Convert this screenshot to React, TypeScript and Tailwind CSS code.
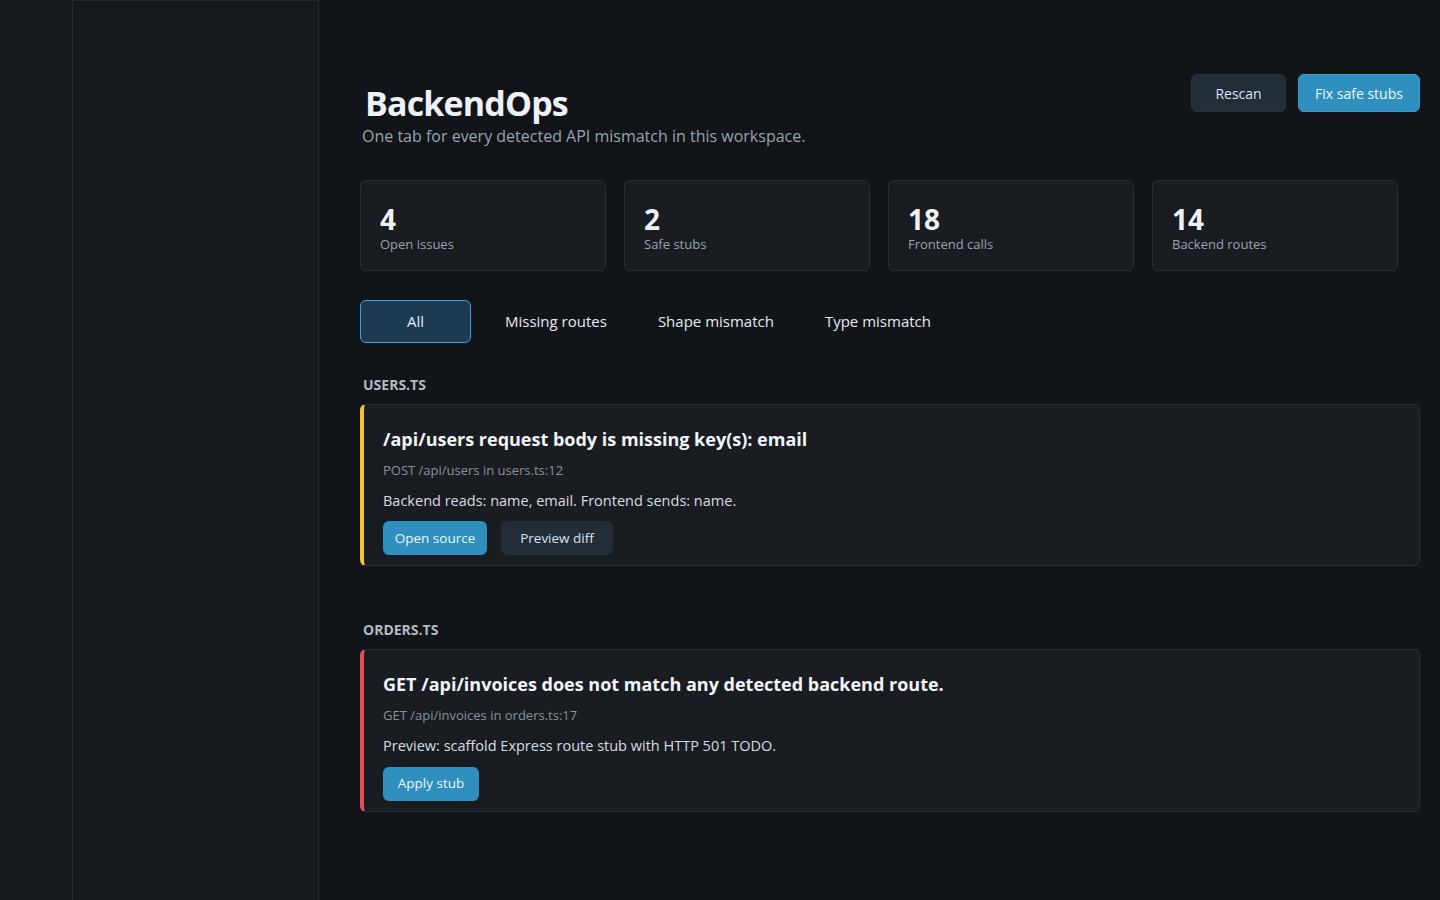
import React from "react";

const stats = [
  { n: "4", label: "Open issues" },
  { n: "2", label: "Safe stubs" },
  { n: "18", label: "Frontend calls" },
  { n: "14", label: "Backend routes" },
];

const tabs = ["Missing routes", "Shape mismatch", "Type mismatch"];

const IssueCard = ({
  accent,
  title,
  meta,
  body,
  actions,
}: {
  accent: string;
  title: string;
  meta: string;
  body: string;
  actions: React.ReactNode;
}) => (
  <div className={`rounded-md border border-[#2a2f36] border-l-4 ${accent} bg-[#191c21] pl-[19px] pr-6 pt-[22px] pb-[10px]`}>
    <h3 className="text-[18px] font-bold text-[#f1f4f8] leading-6">{title}</h3>
    <p className="mt-[10px] text-[13px] text-[#8a919b]">{meta}</p>
    <p className="mt-[9px] text-[14.5px] text-[#d7dce2]">{body}</p>
    <div className="mt-[10px] flex gap-[14px]">{actions}</div>
  </div>
);

export default function App() {
  return (
    <div className="flex h-[900px] w-[1440px] overflow-hidden bg-[#111418] text-[#e6eaef]" style={{ fontFamily: '"Open Sans", "Noto Sans", sans-serif' }}>
      <div className="w-[72px] shrink-0 bg-[#15181c]" />
      <aside className="w-[247px] shrink-0 border-x border-t border-[#262a30] bg-[#15181d]" />
      <main className="flex-1 pl-[41px] pr-5 pt-[74px]">
        <div className="flex items-start justify-between">
          <div className="pt-[8px]">
            <h1 className="pl-[5px] text-[34px] font-bold leading-[42px] text-[#eef2f7] tracking-tight">BackendOps</h1>
            <p className="pl-[2px] text-[16px] text-[#9aa3ad]">One tab for every detected API mismatch in this workspace.</p>
          </div>
          <div className="flex gap-[12px]">
            <button className="h-[38px] w-[95px] rounded-md border border-[#2a323c] bg-[#232d38] text-[14px] text-[#d6e4f2]">Rescan</button>
            <button className="h-[38px] w-[122px] rounded-md border border-[#3a9fd0] bg-[#2f8fbf] text-[14px] text-[#eef6fc]">Fix safe stubs</button>
          </div>
        </div>

        <div className="mt-[32px] flex gap-[18px]">
          {stats.map((s) => (
            <div key={s.label} className="h-[91px] w-[246px] rounded-md border border-[#2a2f36] bg-[#191c21] px-[19px] pt-[22px]">
              <div className="text-[28px] font-bold leading-8 text-[#eef2f7]">{s.n}</div>
              <div className="text-[13px] text-[#9aa3ad]">{s.label}</div>
            </div>
          ))}
        </div>

        <div className="mt-[29px] flex items-center">
          <button className="h-[43px] w-[111px] rounded-md border border-[#3aa6d8] bg-[#1e3a52] text-[15px] text-[#e6f0f8]">All</button>
          <div className="ml-[34px] flex gap-[51px] text-[15px] text-[#e6eaef]">
            {tabs.map((t) => (
              <span key={t}>{t}</span>
            ))}
          </div>
        </div>

        <h2 className="mt-[31px] pl-[3px] text-[14px] font-bold text-[#b3bac3]">USERS.TS</h2>
        <div className="mt-[9px]">
          <IssueCard
            accent="border-l-[#f2c233]"
            title="/api/users request body is missing key(s): email"
            meta="POST /api/users in users.ts:12"
            body="Backend reads: name, email. Frontend sends: name."
            actions={
              <>
                <button className="h-[34px] w-[104px] rounded-md bg-[#2f8fbf] text-[13.5px] text-[#eef6fc]">Open source</button>
                <button className="h-[34px] w-[112px] rounded-md bg-[#232d38] text-[13.5px] text-[#d6e4f2]">Preview diff</button>
              </>
            }
          />
        </div>

        <h2 className="mt-[53px] pl-[3px] text-[14px] font-bold text-[#b3bac3]">ORDERS.TS</h2>
        <div className="mt-[9px]">
          <IssueCard
            accent="border-l-[#e05260]"
            title="GET /api/invoices does not match any detected backend route."
            meta="GET /api/invoices in orders.ts:17"
            body="Preview: scaffold Express route stub with HTTP 501 TODO."
            actions={
              <button className="h-[34px] w-[96px] rounded-md bg-[#2f8fbf] text-[13.5px] text-[#eef6fc]">Apply stub</button>
            }
          />
        </div>
      </main>
    </div>
  );
}
